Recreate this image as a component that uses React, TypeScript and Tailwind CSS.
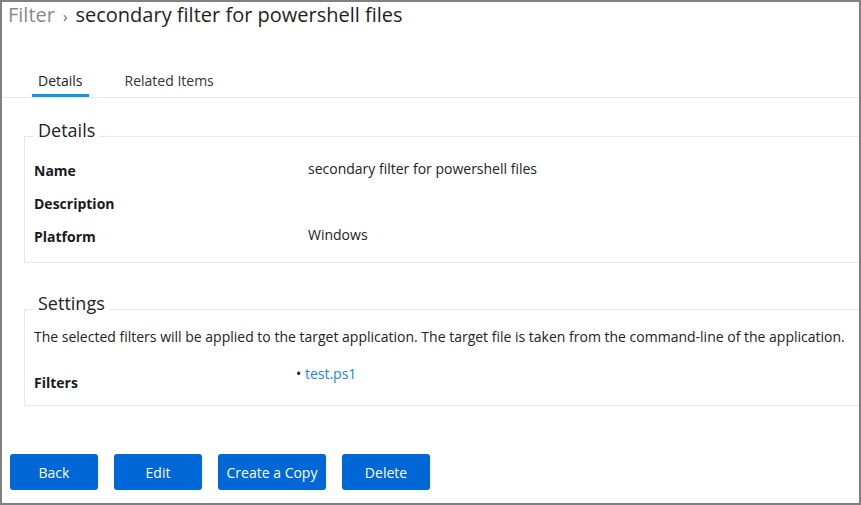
import React from 'react';

const rows = [
  { label: 'Name', value: 'secondary filter for powershell files' },
  { label: 'Description', value: '' },
  { label: 'Platform', value: 'Windows' },
];

const actions = [
  { label: 'Back', width: 'w-[88px]' },
  { label: 'Edit', width: 'w-[88px]' },
  { label: 'Create a Copy', width: 'w-[108px]' },
  { label: 'Delete', width: 'w-[88px]' },
];

export default function App() {
  return (
    <div
      className="w-[861px] h-[505px] border-2 border-[#808080] bg-white text-[#222] overflow-hidden"
      style={{ fontFamily: '"Open Sans", "Noto Sans", sans-serif' }}
    >
      {/* Breadcrumb title */}
      <div className="flex items-baseline pl-[6px] text-[20px] leading-[26px]">
        <span className="text-[#8a8a8a]">Filter</span>
        <span className="mx-[8px] text-[15px] text-[#666]">›</span>
        <span className="text-[#1e1e1e]">secondary filter for powershell files</span>
      </div>

      {/* Tabs */}
      <div className="mt-[42px] flex border-b border-[#e8e8e8] pl-[30px] text-[14px] leading-5">
        <div className="px-[6px] pb-[3px] border-b-[3px] border-[#1592e6] text-[#222]">Details</div>
        <div className="ml-[30px] px-[6px] pb-[3px] border-b-[3px] border-transparent text-[#333]">
          Related Items
        </div>
      </div>

      {/* Details */}
      <fieldset className="mt-[20px] ml-[22px] border border-r-0 border-[#e8e8e8] pl-[9px] pt-[7px] pb-[15px]">
        <legend className="px-1 pb-[12px] text-[18px] leading-[24px] text-[#222]">Details</legend>
        <div className="grid grid-cols-[274px_1fr] gap-y-[13px] text-[14px]">
          {rows.map((r) => (
            <React.Fragment key={r.label}>
              <div className="font-bold leading-5 text-[#1a1a1a]">{r.label}</div>
              <div className="leading-4 text-[#222]">{r.value}</div>
            </React.Fragment>
          ))}
        </div>
      </fieldset>

      {/* Settings */}
      <fieldset className="mt-[28px] ml-[22px] border border-r-0 border-[#e8e8e8] pl-[9px] pt-0 pb-[12px]">
        <legend className="px-1 pb-[12px] text-[18px] leading-[24px] text-[#222]">Settings</legend>
        <p className="text-[14px] leading-5 text-[#222]">
          The selected filters will be applied to the target application. The target file is taken from the
          command-line of the application.
        </p>
        <div className="mt-[19px] grid grid-cols-[262px_1fr] text-[14px]">
          <div className="mt-[7px] font-bold leading-5 text-[#1a1a1a]">Filters</div>
          <ul className="leading-4">
            <li>
              <span className="text-[#111]">•</span>{' '}
              <a href="#" className="text-[#1a86dd]">test.ps1</a>
            </li>
          </ul>
        </div>
      </fieldset>

      {/* Actions */}
      <div className="mt-[48px] ml-[8px] flex gap-4">
        {actions.map((a) => (
          <button
            key={a.label}
            type="button"
            className={`${a.width} h-9 rounded-[3px] bg-[#0067d6] text-[14px] text-white`}
          >
            {a.label}
          </button>
        ))}
      </div>
    </div>
  );
}
